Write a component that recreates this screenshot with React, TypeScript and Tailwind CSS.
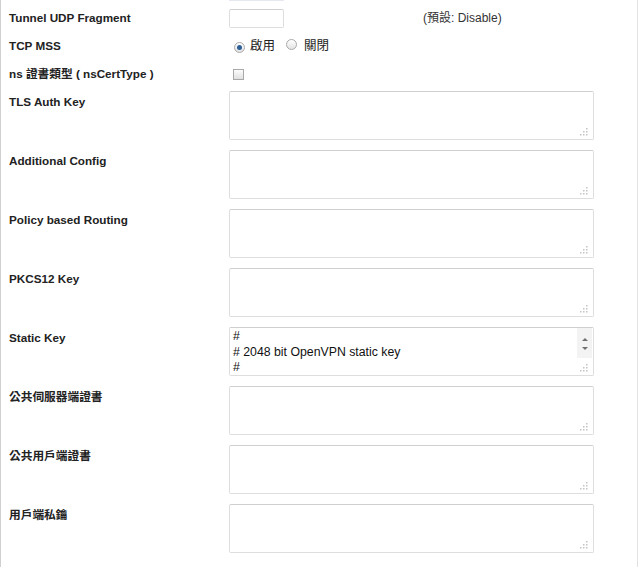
import React from 'react';

const font = { fontFamily: '"Liberation Sans", "Noto Sans CJK TC", Arial, sans-serif' };

const Grip: React.FC = () => (
  <svg className="absolute right-[6px] bottom-[4px]" width="8" height="8" viewBox="0 0 8 8">
    <rect x="6" y="0" width="1.5" height="1.5" fill="#c4c4c4" />
    <rect x="6" y="3" width="1.5" height="1.5" fill="#c4c4c4" />
    <rect x="3" y="3" width="1.5" height="1.5" fill="#c4c4c4" />
    <rect x="6" y="6" width="1.5" height="1.5" fill="#c4c4c4" />
    <rect x="3" y="6" width="1.5" height="1.5" fill="#c4c4c4" />
    <rect x="0" y="6" width="1.5" height="1.5" fill="#c4c4c4" />
  </svg>
);

const Area: React.FC<{ value?: string; scroll?: boolean }> = ({ value, scroll }) => (
  <div className="relative w-[365px] h-[49px]">
    <textarea
      readOnly
      value={value || ''}
      className="w-full h-full resize-none overflow-hidden rounded-[2px] border border-[#dedede] border-t-[#cfcfcf] bg-white pl-[3px] pt-[1px] text-[12.3px] leading-[15.5px] text-[#111] outline-none"
      style={font}
    />
    {scroll && (
      <div className="absolute right-[2px] top-[1px] w-[15px] h-[30px] bg-[#f3f3f3] flex flex-col items-center pt-[10px] gap-[6px]">
        <svg width="6" height="3" viewBox="0 0 6 3"><path d="M3 0 L6 3 L0 3 Z" fill="#707070" /></svg>
        <svg width="6" height="3" viewBox="0 0 6 3"><path d="M0 0 L6 0 L3 3 Z" fill="#707070" /></svg>
      </div>
    )}
    <Grip />
  </div>
);

const Radio: React.FC<{ on?: boolean }> = ({ on }) => (
  <span className="inline-flex w-[11px] h-[11px] rounded-full border border-[#a9a9a9] bg-gradient-to-b from-[#ffffff] to-[#e3e3e3] items-center justify-center">
    {on && <span className="w-[5px] h-[5px] rounded-full bg-[#2f5f97]" />}
  </span>
);

const areaRows: { label: string; value?: string; scroll?: boolean }[] = [
  { label: 'TLS Auth Key' },
  { label: 'Additional Config' },
  { label: 'Policy based Routing' },
  { label: 'PKCS12 Key' },
  { label: 'Static Key', value: '#\n# 2048 bit OpenVPN static key\n#\n-----BEGIN OpenVPN Static key V1-----', scroll: true },
  { label: '公共伺服器端證書' },
  { label: '公共用戶端證書' },
  { label: '用戶端私鑰' },
];

export default function App() {
  return (
    <div className="w-[640px] h-[567px] bg-white overflow-hidden" style={font}>
      <div className="w-[638px] h-full border-l border-r border-l-[#cfcfcf] border-r-[#e2e2e2] text-[#222]">
        <div className="ml-[228px] w-[55px] h-px bg-[#e6eaf0]" />
        <div className="pt-[3px]">
          <div className="flex items-center h-[28px]">
            <div className="w-[228px] pl-[8px] text-[11.7px] font-bold">Tunnel UDP Fragment</div>
            <div className="w-[55px] h-[19px] rounded-[2px] border border-[#dedede] border-t-[#cfcfcf]" />
            <div className="ml-[139px] text-[12px] text-[#333]">(預設: Disable)</div>
          </div>
          <div className="flex items-center h-[28px]">
            <div className="w-[228px] pl-[8px] text-[11.7px] font-bold">TCP MSS</div>
            <div className="flex items-center text-[12.5px] text-[#222]">
              <span className="ml-[5px]"><Radio on /></span>
              <span className="ml-[5px]">啟用</span>
              <span className="ml-[11px]"><Radio /></span>
              <span className="ml-[7px]">關閉</span>
            </div>
          </div>
          <div className="flex items-center h-[28px]">
            <div className="w-[228px] pl-[8px] text-[11.7px] font-bold">ns 證書類型 ( nsCertType )</div>
            <span className="ml-[4px] w-[11px] h-[11px] border border-[#a8a8a8] bg-gradient-to-b from-[#fdfdfd] to-[#e0e0e0]" />
          </div>
        </div>
        <div className="mt-[3px] flex flex-col gap-[10px]">
          {areaRows.map((r) => (
            <div key={r.label} className="flex items-start">
              <div className="w-[228px] pl-[8px] pt-[4px] text-[11.7px] leading-[14px] font-bold">{r.label}</div>
              <Area value={r.value} scroll={r.scroll} />
            </div>
          ))}
        </div>
      </div>
    </div>
  );
}
